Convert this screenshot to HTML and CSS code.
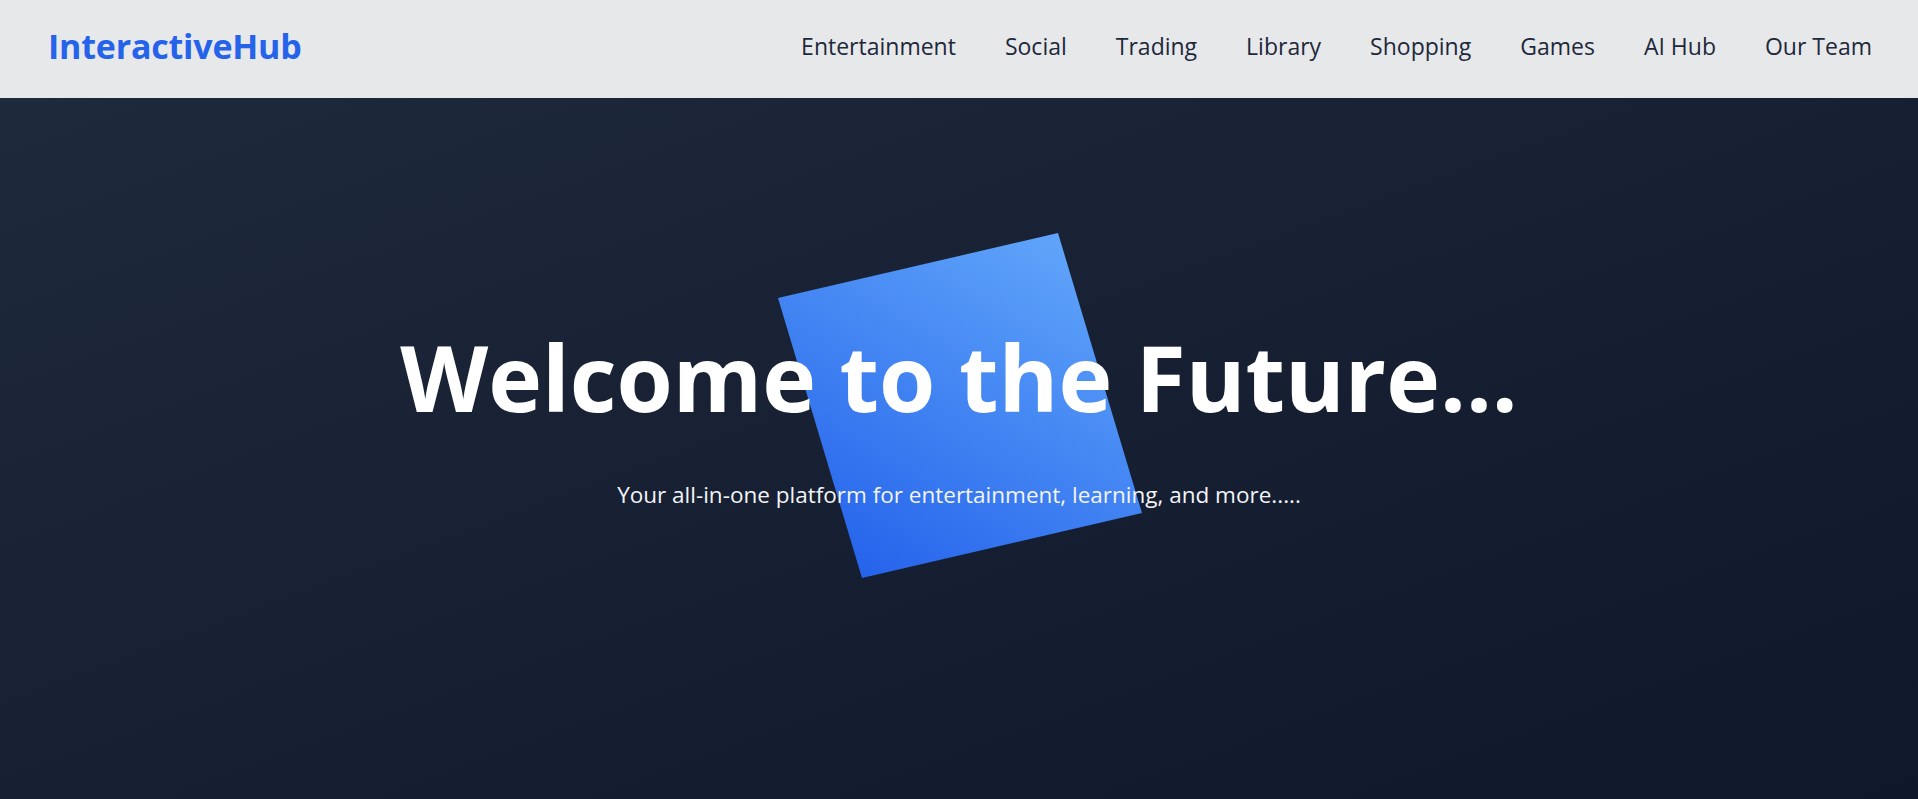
FILE: index.html
```html
<!DOCTYPE html>
<html lang="en">
<head>
<meta charset="utf-8">
<title>InteractiveHub</title>
<link rel="stylesheet" href="styles.css">
</head>
<body>
<header class="site-header">
  <a class="logo" href="#">InteractiveHub</a>
  <nav class="main-nav">
    <a href="#">Entertainment</a>
    <a href="#">Social</a>
    <a href="#">Trading</a>
    <a href="#">Library</a>
    <a href="#">Shopping</a>
    <a href="#">Games</a>
    <a href="#">AI Hub</a>
    <a href="#">Our Team</a>
  </nav>
</header>
<section class="hero">
  <div class="hero-shape"></div>
  <div class="hero-content">
    <h1 class="hero-title">Welcome to the Future...</h1>
    <p class="hero-subtitle">Your all-in-one platform for entertainment, learning, and more.....</p>
  </div>
</section>
</body>
</html>
```
FILE: styles.css
```css
* { box-sizing: border-box; }
html, body { margin: 0; padding: 0; }
body {
  font-family: "Open Sans", "Noto Sans", sans-serif;
  background: #0f172a;
  overflow: hidden;
}
.site-header {
  height: 98px;
  background: #e7e8ea;
  display: flex;
  align-items: center;
  justify-content: space-between;
  padding: 0 46px 7px 48px;
}
.logo {
  color: #2563eb;
  font-weight: 700;
  font-size: 34px;
  text-decoration: none;
  letter-spacing: -0.2px;
}
.main-nav {
  display: flex;
  gap: 49px;
}
.main-nav a {
  color: #1e293b;
  font-size: 23px;
  font-weight: 500;
  text-decoration: none;
}
.hero {
  position: relative;
  height: calc(100vh - 98px);
  background: linear-gradient(to bottom right, #1e293b, #0f172a);
  display: flex;
  align-items: center;
  justify-content: center;
  padding-bottom: 53px;
  overflow: hidden;
}
.hero-shape {
  position: absolute;
  left: 50%;
  top: 200px;
  margin-left: -181px;
  width: 288px;
  height: 288px;
  transform-origin: 0 0;
  transform: matrix(0.9722, -0.2257, 0.2917, 0.9722, 0, 0);
  background: linear-gradient(to bottom left, #60a5fa, #2563eb);
}
.hero-content {
  position: relative;
  text-align: center;
  color: #ffffff;
}
.hero-title {
  margin: 0;
  font-size: 91px;
  line-height: 1;
  font-weight: 700;
}
.hero-subtitle {
  margin: 55px 0 0;
  font-size: 22.5px;
  line-height: 1.5;
  color: #f3f4f6;
}
```
